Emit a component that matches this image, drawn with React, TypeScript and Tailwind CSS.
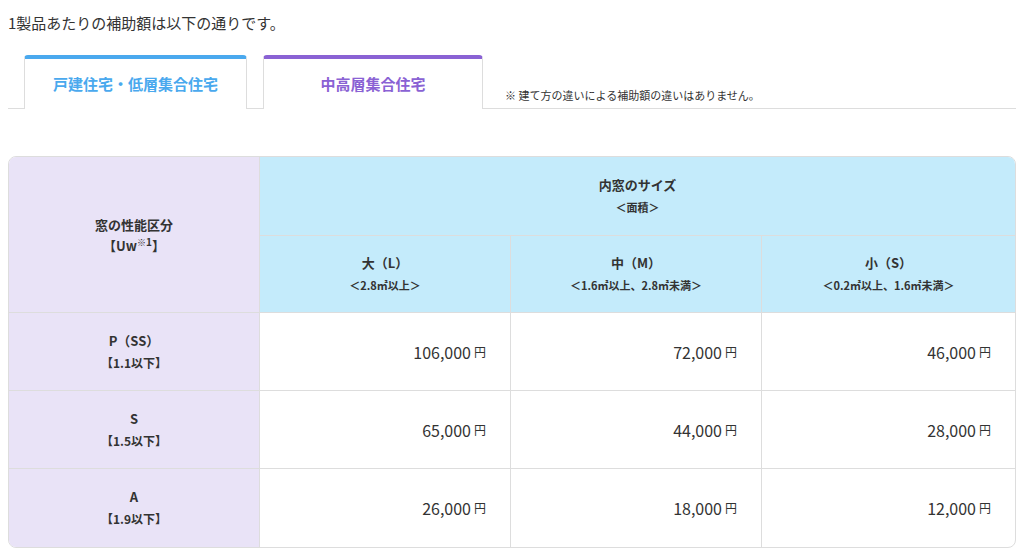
export default function App() {
  const font = { fontFamily: '"Noto Sans CJK JP", "Noto Sans", sans-serif' };
  const rows = [
    { k: 'P（SS）', v: '【1.1以下】', a: ['106,000', '72,000', '46,000'] },
    { k: 'S', v: '【1.5以下】', a: ['65,000', '44,000', '28,000'] },
    { k: 'A', v: '【1.9以下】', a: ['26,000', '18,000', '12,000'] },
  ];
  const sizes = [
    ['大（L）', '＜2.8㎡以上＞'],
    ['中（M）', '＜1.6㎡以上、2.8㎡未満＞'],
    ['小（S）', '＜0.2㎡以上、1.6㎡未満＞'],
  ];
  return (
    <div className="w-[1024px] h-[560px] bg-white text-[#333] overflow-hidden" style={font}>
      <p className="pl-[8px] pt-[11px] text-[15px] leading-[24px]">1製品あたりの補助額は以下の通りです。</p>
      <div className="mx-[8px] mt-[20px] flex items-end border-b border-[#ddd]">
        <div className="ml-[16px] w-[223px] h-[54px] border-t-[4px] border-t-[#4aa9ee] border-x border-[#ddd] rounded-t-[4px] flex items-center justify-center text-[15px] font-bold text-[#4aa9ee] -mb-px bg-white">戸建住宅・低層集合住宅</div>
        <div className="ml-[16px] w-[220px] h-[54px] border-t-[4px] border-t-[#8a62d4] border-x border-[#ddd] rounded-t-[4px] flex items-center justify-center text-[15px] font-bold text-[#8a62d4] -mb-px bg-white">中高層集合住宅</div>
        <span className="ml-[22px] mb-[5px] text-[11px]">※ 建て方の違いによる補助額の違いはありません。</span>
      </div>
      <div className="mx-[8px] mt-[47px] border border-[#ddd] rounded-[8px] overflow-hidden grid grid-cols-[251px_251px_251px_1fr] grid-rows-[79px_77px_78px_78px_78px] text-[13px] font-bold">
        <div className="row-span-2 bg-[#e9e3f7] flex flex-col items-center justify-center leading-[21px] border-r border-b border-[#ddd]">
          <span>窓の性能区分</span>
          <span>【Uw<sup className="text-[9px] font-normal">※</sup><sup className="text-[10px]">1</sup>】</span>
        </div>
        <div className="col-span-3 bg-[#c4ebfb] flex flex-col items-center justify-center leading-[22px] border-b border-[#ddd]">
          <span>内窓のサイズ</span>
          <span className="text-[11px]">＜面積＞</span>
        </div>
        {sizes.map(([t, s], i) => (
          <div key={t} className={`bg-[#c4ebfb] flex flex-col items-center justify-center leading-[22px] border-b border-[#ddd] ${i < 2 ? 'border-r' : ''}`}>
            <span>{t}</span>
            <span className="text-[11px]">{s}</span>
          </div>
        ))}
        {rows.map((r, ri) => (
          <>
            <div key={r.k} className={`bg-[#e9e3f7] flex flex-col items-center justify-center leading-[22px] border-r border-[#ddd] ${ri < 2 ? 'border-b' : ''}`}>
              <span>{r.k}</span>
              <span className="text-[12px]">{r.v}</span>
            </div>
            {r.a.map((n, i) => (
              <div key={r.k + i} className={`flex items-center justify-end pr-[24px] font-normal text-[16px] border-[#ddd] ${i < 2 ? 'border-r' : ''} ${ri < 2 ? 'border-b' : ''}`}>
                {n}<span className="text-[12px] ml-[3px]">円</span>
              </div>
            ))}
          </>
        ))}
      </div>
    </div>
  );
}
